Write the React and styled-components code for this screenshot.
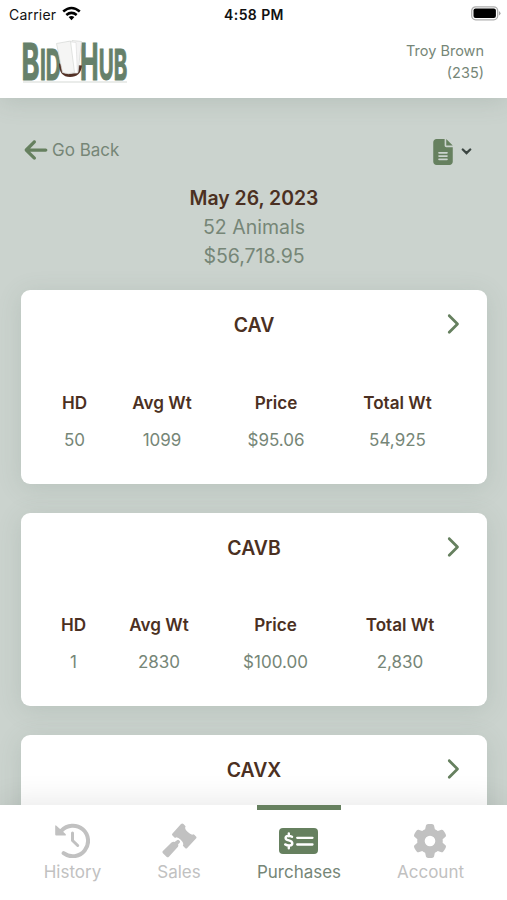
import React from "react";
import styled, { createGlobalStyle } from "styled-components";
import {
  FaArrowLeft,
  FaChevronRight,
  FaFileLines,
  FaGear,
} from "react-icons/fa6";

const GREEN = "#66805f";
const SAGE = "#768677";
const BROWN = "#4b3022";
const GREY = "#c1c1c1";

const GlobalStyle = createGlobalStyle`
  * { box-sizing: border-box; }
  body {
    margin: 0;
    background: #cbd3ce;
    font-family: Inter, "Liberation Sans", sans-serif;
    color: ${SAGE};
  }
`;

const Screen = styled.div`
  display: flex;
  flex-direction: column;
  height: 900px;
  width: 507px;
  overflow: hidden;
  background: #cbd3ce;
`;

const TopArea = styled.div`
  flex: none;
  height: 98.4px;
  background: #fff;
  box-shadow: 0 2px 24px rgba(90, 110, 100, 0.2);
  z-index: 1;
`;

const StatusBar = styled.div`
  display: grid;
  grid-template-columns: 1fr auto 1fr;
  align-items: center;
  height: 28px;
  padding: 0 6px 0 9px;
  color: #111;
`;

const Carrier = styled.div`
  display: flex;
  align-items: center;
  gap: 6px;
  font-size: 14px;
  letter-spacing: 0.2px;
  svg { margin-top: -2px; }
`;

const Clock = styled.div`
  font-size: 14px;
  font-weight: 600;
  letter-spacing: 0.4px;
  margin-right: 2px;
`;

const BatterySlot = styled.div`
  display: flex;
  justify-content: flex-end;
  padding-bottom: 1px;
`;

const Header = styled.header`
  display: flex;
  justify-content: space-between;
  padding: 0 23px 0 21px;
`;

const UserName = styled.div`
  font-size: 14.5px;
  line-height: 22px;
  text-align: right;
  padding-top: 12px;
`;

const Content = styled.main`
  flex: 1;
  min-height: 0;
  overflow: hidden;
  padding: 0 20px 0 21px;
`;

const Toolbar = styled.div`
  display: flex;
  justify-content: space-between;
  align-items: center;
  height: 26px;
  margin-top: 39px;
  padding: 0 15px 0 2px;
`;

const BackButton = styled.div`
  display: flex;
  align-items: center;
  gap: 3px;
  font-size: 17px;
  svg { color: ${GREEN}; }
`;

const ExportMenu = styled.div`
  display: flex;
  align-items: center;
  gap: 5px;
  padding-top: 3px;
  color: #3c4642;
  svg:first-child { color: ${GREEN}; }
`;

const Summary = styled.section`
  padding-top: 20.5px;
  height: 127px;
  text-align: center;
  font-size: 19.5px;
  line-height: 29.3px;
`;

const SummaryDate = styled.div`
  color: ${BROWN};
  font-weight: 600;
  font-size: 19.4px;
`;

const Card = styled.article`
  height: 193.5px;
  margin-bottom: 29px;
  border-radius: 9px;
  background: #fff;
  box-shadow: 0 4px 24px rgba(90, 110, 100, 0.16);
`;

const CardHeader = styled.div`
  display: grid;
  grid-template-columns: 24px 1fr 24px;
  align-items: center;
  justify-items: center;
  height: 68px;
  padding: 0 22px;
  svg { color: ${GREEN}; margin-left: -2px; }
`;

const CardTitle = styled.div`
  color: ${BROWN};
  font-size: 19.4px;
  font-weight: 600;
  padding-top: 2px;
`;

const Stats = styled.div`
  display: grid;
  grid-template-columns: ${({ $columns }) => $columns};
  padding-top: 25.2px;
  margin-left: 19px;
  text-align: center;
`;

const StatLabel = styled.div`
  color: ${BROWN};
  font-size: 17.1px;
  font-weight: 600;
  line-height: 38px;
`;

const StatValue = styled.div`
  font-size: 17px;
  line-height: 37.4px;
`;

const TabBar = styled.nav`
  flex: none;
  display: grid;
  grid-template-columns: 145px 68px 172px 91px;
  justify-content: start;
  height: 95.5px;
  background: #fff;
  box-shadow: 0 -4px 28px rgba(0, 0, 0, 0.09);
  z-index: 1;
`;

const Tab = styled.div`
  display: flex;
  flex-direction: column;
  align-items: center;
  justify-self: center;
  color: ${({ $active }) => ($active ? SAGE : GREY)};
  border-top: 5px solid ${({ $active }) => ($active ? GREEN : "transparent")};
  font-size: 17px;
  svg { color: ${({ $active }) => ($active ? GREEN : GREY)}; }
`;

const TabIcon = styled.div`
  display: flex;
  align-items: center;
  height: 36px;
  margin-top: 13px;
`;

const TabLabel = styled.div`
  line-height: 26px;
`;

const LogoImage = styled.svg`
  display: block;
  overflow: visible;
`;

const LogoText = styled.text`
  font-family: Inter, sans-serif;
  font-weight: 700;
  fill: #66806a;
  stroke: #66806a;
  stroke-width: 1.2px;
`;

function Logo() {
  return (
    <LogoImage width="110" height="70" viewBox="0 0 110 70">
      <g transform="translate(0 51.5)">
        <LogoText transform="scale(.5 1)" x="1" y="0" fontSize="51" textLength="36" lengthAdjust="spacingAndGlyphs">B</LogoText>
        <LogoText transform="scale(.5 1)" x="38" y="0" fontSize="43" textLength="42" lengthAdjust="spacingAndGlyphs">ID</LogoText>
        <LogoText transform="scale(.5 1)" x="118" y="0" fontSize="51" textLength="37" lengthAdjust="spacingAndGlyphs">H</LogoText>
        <LogoText transform="scale(.5 1)" x="155.5" y="0" fontSize="43" textLength="57" lengthAdjust="spacingAndGlyphs">UB</LogoText>
      </g>
      <g transform="translate(0 9.5)">
        <path d="M38 26c0 9 4 13.5 11 13.5S60 36 61 28z" fill="#533126" />
        <path d="M51 3l9.5 1-3.5 31-11 .5z" fill="#f4f4f4" stroke="#d5d8d5" strokeWidth=".7" />
        <path d="M47 4l8 1 1.5 30.5H47z" fill="#fff" stroke="#dedede" strokeWidth=".7" />
        <path d="M35.5 6l14-2.5 4 31.5q-6 2.5-12 0z" fill="#f5f5f4" stroke="#d6d8d6" strokeWidth=".7" />
        <path d="M2 44.5h104" stroke="#d5d9d5" />
      </g>
    </LogoImage>
  );
}

function WifiIcon() {
  return (
    <svg width="19" height="15" viewBox="0 0 19 15" fill="none" stroke="#000" strokeWidth="2.6">
      <path d="M1.2 5.5q8.3-7 16.6 0M4.3 9q5.2-4.2 10.4 0" />
      <path d="M6.6 11.1q2.9-2.2 5.8 0L9.5 14.2z" fill="#000" stroke="none" />
    </svg>
  );
}

function Battery() {
  return (
    <svg width="30" height="15" viewBox="0 0 30 15">
      <rect x=".7" y=".8" width="26" height="13" rx="4" fill="#fff" stroke="#adadad" strokeWidth="1.3" />
      <rect x="2.5" y="2.6" width="22.4" height="9.4" rx="2" fill="#000" />
      <path d="M28 5q3 2.3 0 4.6z" fill="#a5a5a5" />
    </svg>
  );
}

function CaretIcon() {
  return (
    <svg width="11" height="8" viewBox="0 0 11 8">
      <path d="M1.8 1.5l3.7 3.6 3.7-3.6" fill="none" stroke="currentColor" strokeWidth="2.3" strokeLinecap="round" />
    </svg>
  );
}

function HistoryIcon() {
  return (
    <svg width="35" height="35" viewBox="0 0 35 35">
      <path d="M6.5 7.6A15.3 15.3 0 1 1 8.6 30.2" fill="none" stroke="currentColor" strokeWidth="4" strokeLinecap="round" />
      <path d="M.2 3.2q0-1.6 1.2-.5l9.2 8.3q1.2 1.5-.6 1.5H1.2q-1 0-1-1z" fill="currentColor" />
      <path d="M17.5 10v7.5l5.2 5" fill="none" stroke="currentColor" strokeWidth="3" strokeLinecap="round" strokeLinejoin="round" />
    </svg>
  );
}

function GavelIcon() {
  return (
    <svg width="35" height="35" viewBox="0 0 35 35" fill="currentColor">
      <path d="M19 1.1q1.3-1.2 2.5 0l1.6 1.6q1 1-.1 2.1.2 2.1 2.8 4.3 2.3 2.4 4.4 2.6 1-1 2.1 0l1.7 1.7q1 1.1 0 2.1L25.2 25q-1 1-2.1 0l-1.7-1.7q-1-1 0-2-.2-2.2-2.7-4.5-2.3-2.3-4.4-2.5-1 1-2.1 0l-1.7-1.7q-1-1 0-2.1z" />
      <path d="M15 17.3q1.1-1 2.2.1l.4.4q1 1.1-.1 2.1l-1.4 1.4q.6 1.7-.6 3L6.9 33.8q-1.2 1.1-2.4 0L.9 30.2q-1-1.2 0-2.3l8.6-8.4q1.4-1.1 3.1-.6z" />
    </svg>
  );
}

function MoneyCheckIcon() {
  return (
    <svg width="39" height="26" viewBox="0 0 39 26">
      <rect width="39" height="26" rx="4" fill="currentColor" />
      <path d="M13 8.8c-2-1.2-6.4-1.6-6.4 1.1 0 3.3 6.7 1.8 6.7 5.3 0 3-4.8 2.6-7.1 1.2M9.8 5.5v2.7m0 9.2v2.8" fill="none" stroke="#fff" strokeWidth="2.4" strokeLinecap="round" />
      <path d="M18.2 9.8h15.3M18.2 16.5h15.3" stroke="#fff" strokeWidth="2.3" strokeLinecap="round" />
    </svg>
  );
}

const LABELS = ["HD", "Avg Wt", "Price", "Total Wt"];

const LOTS = [
  { name: "CAV", columns: "69px 106px 122px 121px", values: ["50", "1099", "$95.06", "54,925"] },
  { name: "CAVB", columns: "67px 104px 129px 120px", values: ["1", "2830", "$100.00", "2,830"] },
  { name: "CAVX" },
];

function LotCard({ lot }) {
  return (
    <Card>
      <CardHeader>
        <span />
        <CardTitle>{lot.name}</CardTitle>
        <FaChevronRight size={22} />
      </CardHeader>
      {lot.values && (
        <Stats $columns={lot.columns}>
          {LABELS.map((label) => <StatLabel key={label}>{label}</StatLabel>)}
          {lot.values.map((value) => <StatValue key={value}>{value}</StatValue>)}
        </Stats>
      )}
    </Card>
  );
}

export default function App() {
  return (
    <>
      <GlobalStyle />
      <Screen>
        <TopArea>
          <StatusBar>
            <Carrier>Carrier <WifiIcon /></Carrier>
            <Clock>4:58 PM</Clock>
            <BatterySlot><Battery /></BatterySlot>
          </StatusBar>
          <Header>
            <Logo />
            <UserName>Troy Brown<br />(235)</UserName>
          </Header>
        </TopArea>
        <Content>
          <Toolbar>
            <BackButton><FaArrowLeft size={26} />Go Back</BackButton>
            <ExportMenu><FaFileLines size={26} /><CaretIcon /></ExportMenu>
          </Toolbar>
          <Summary>
            <SummaryDate>May 26, 2023</SummaryDate>
            <div>52 Animals</div>
            <div>$56,718.95</div>
          </Summary>
          {LOTS.map((lot) => <LotCard key={lot.name} lot={lot} />)}
        </Content>
        <TabBar>
          <Tab><TabIcon><HistoryIcon /></TabIcon><TabLabel>History</TabLabel></Tab>
          <Tab><TabIcon><GavelIcon /></TabIcon><TabLabel>Sales</TabLabel></Tab>
          <Tab $active><TabIcon><MoneyCheckIcon /></TabIcon><TabLabel>Purchases</TabLabel></Tab>
          <Tab><TabIcon><FaGear size={34} /></TabIcon><TabLabel>Account</TabLabel></Tab>
        </TabBar>
      </Screen>
    </>
  );
}
